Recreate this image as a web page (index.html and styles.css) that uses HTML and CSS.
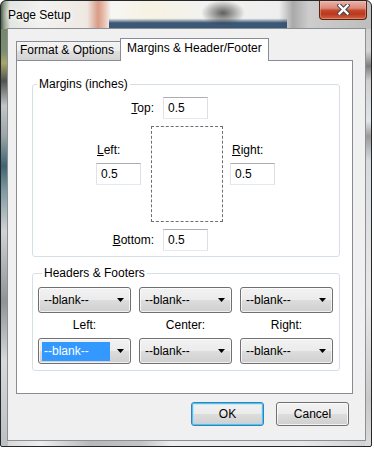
FILE: index.html
```html
<!DOCTYPE html>
<html>
<head>
<meta charset="utf-8">
<title>Page Setup</title>
<link rel="stylesheet" href="styles.css">
</head>
<body>
<div class="window">
  <div class="titlebar">
    <span class="title">Page Setup</span>
    <div class="close">
      <svg width="13" height="11" viewBox="0 0 13 11"><path d="M2.5 1.5 L10.5 9.5 M10.5 1.5 L2.5 9.5" stroke="#40464c" stroke-width="4.4" stroke-linecap="square"/><path d="M2.5 1.5 L10.5 9.5 M10.5 1.5 L2.5 9.5" stroke="#ffffff" stroke-width="2.4" stroke-linecap="square"/></svg>
    </div>
  </div>
  <div class="client">
    <div class="tabs">
      <div class="tab">Format &amp; Options</div>
      <div class="tab active">Margins &amp; Header/Footer</div>
    </div>
    <div class="panel">
      <fieldset class="group margins">
        <legend>Margins (inches)</legend>
        <div class="mrow">
          <label class="mlabel"><u>T</u>op:</label>
          <div class="input">0.5</div>
        </div>
        <div class="mmid">
          <div class="side left">
            <label class="slabel"><u>L</u>eft:</label>
            <div class="input">0.5</div>
          </div>
          <div class="preview"></div>
          <div class="side right">
            <label class="slabel"><u>R</u>ight:</label>
            <div class="input">0.5</div>
          </div>
        </div>
        <div class="mrow bottom">
          <label class="mlabel"><u>B</u>ottom:</label>
          <div class="input">0.5</div>
        </div>
      </fieldset>
      <fieldset class="group hf">
        <legend>Headers &amp; Footers</legend>
        <div class="hfgrid">
          <div class="combo"><span>--blank--</span><svg class="arrow" width="7" height="4" viewBox="0 0 7 4"><polygon points="0,0 7,0 3.5,4" fill="#000"/></svg></div>
          <div class="combo"><span>--blank--</span><svg class="arrow" width="7" height="4" viewBox="0 0 7 4"><polygon points="0,0 7,0 3.5,4" fill="#000"/></svg></div>
          <div class="combo"><span>--blank--</span><svg class="arrow" width="7" height="4" viewBox="0 0 7 4"><polygon points="0,0 7,0 3.5,4" fill="#000"/></svg></div>
          <div class="hflabel">Left:</div>
          <div class="hflabel">Center:</div>
          <div class="hflabel">Right:</div>
          <div class="combo focused"><span class="sel">--blank--</span><svg class="arrow" width="7" height="4" viewBox="0 0 7 4"><polygon points="0,0 7,0 3.5,4" fill="#000"/></svg></div>
          <div class="combo"><span>--blank--</span><svg class="arrow" width="7" height="4" viewBox="0 0 7 4"><polygon points="0,0 7,0 3.5,4" fill="#000"/></svg></div>
          <div class="combo"><span>--blank--</span><svg class="arrow" width="7" height="4" viewBox="0 0 7 4"><polygon points="0,0 7,0 3.5,4" fill="#000"/></svg></div>
        </div>
      </fieldset>
    </div>
    <div class="buttons">
      <button class="btn default">OK</button>
      <button class="btn">Cancel</button>
    </div>
  </div>
</div>
</body>
</html>
```
FILE: styles.css
```css
* { box-sizing: border-box; }
html, body { margin: 0; padding: 0; background: #ffffff; }
body {
  font-family: "Liberation Sans", Arial, sans-serif;
  font-size: 12px;
  color: #000;
}

.window {
  width: 372px;
  height: 447px;
  border: 1px solid #23282c;
  border-radius: 6px 6px 2px 2px;
  display: flex;
  flex-direction: column;
  overflow: hidden;
  background:
    radial-gradient(ellipse 22px 13px at 222px 12px, rgba(45,45,45,0.75), rgba(45,45,45,0) 100%) no-repeat,
    linear-gradient(to bottom, rgba(44,74,108,0) 0, rgba(44,74,108,0) 62%, rgba(44,74,108,0.92) 78%, rgba(44,74,108,0.92) 100%) 108px 0 / 178px 28px no-repeat,
    linear-gradient(to right, #4f5f4b 0, #8d9c87 3px, #e3e5e0 9px, #f2f2f0 40px, #efe8e2 86px, #d89c86 97px, #e6b8a4 102px, #f6f6f4 110px, #f7f3e2 150px, #f2f2f0 200px, #eeeeee 278px, #a9a9a9 292px, #cdcdcd 308px, #bdbdbd 372px) 0 0 / 100% 28px no-repeat,
    linear-gradient(to bottom, #6e8266 0, #7b8c70 50px, #a9a66a 62px, #50534f 80px, #c3c6c8 105px, #9aa5a8 135px, #3e6571 165px, #7f9aa2 190px, #d0d2d4 230px, #8f9396 300px, #d6d8da 360px, #bcbfc2 447px) 0 0 / 7px 100% no-repeat,
    linear-gradient(to bottom, #c8c8c8 0, #d4d4d4 50px, #7d7d7d 65px, #cfcfcf 80px, #e2e4e6 120px, #9a9a9a 135px, #d9dadc 160px, #e8e8e8 300px, #c9c9c9 400px, #dcdcdc 447px) 100% 0 / 6px 100% no-repeat,
    linear-gradient(to right, #d5d5d5 0, #eeeeee 40px, #b8b8b8 90px, #c4c4c4 140px, #ededed 170px, #e8e8e8 300px, #d0d0d0 372px) 0 100% / 100% 6px no-repeat,
    #d8d9da;
}

.titlebar {
  flex: none;
  height: 27px;
  display: flex;
  justify-content: space-between;
  align-items: flex-start;
  padding: 0 4px 0 7px;
}
.title {
  margin-top: 6px;
  line-height: 16px;
  color: #000;
  text-shadow: 0 0 5px #fff, 0 0 9px rgba(255,255,255,0.9), 0 0 12px rgba(255,255,255,0.8);
}
.close {
  width: 48px;
  height: 19px;
  border: 1px solid #5b1f14;
  border-top: none;
  border-radius: 0 0 4px 4px;
  background: linear-gradient(to bottom, #ebb3a6 0, #d9897a 40%, #c6472c 52%, #b9391e 72%, #d2623f 100%);
  box-shadow: inset 0 0 0 1px rgba(255,200,185,0.35);
  display: flex;
  align-items: center;
  justify-content: center;
  padding-bottom: 1px;
}

.client {
  flex: none;
  height: 413px;
  margin: 0 5px 0 6px;
  background: #f0f0f0;
  border: 1px solid #8c9095;
  padding: 9px 12px 0 8px;
  display: flex;
  flex-direction: column;
}

.tabs {
  display: flex;
  align-items: flex-end;
  height: 23px;
  margin-bottom: -1px;
  position: relative;
  z-index: 1;
}
.tab {
  width: 105px;
  height: 19px;
  margin-bottom: 1px;
  padding: 0 0 0 3px;
  border: 1px solid #898c95;
  border-bottom: none;
  line-height: 17px;
  white-space: nowrap;
  background: linear-gradient(to bottom, #f4f4f4 0, #ececec 50%, #dfdfdf 50%, #d4d4d4 100%);
}
.tab.active {
  width: 149px;
  height: 23px;
  margin-bottom: 0;
  margin-left: -1px;
  padding: 1px 0 0 6px;
  line-height: 16px;
  background: #ffffff;
}

.panel {
  flex: none;
  height: 334px;
  background: #ffffff;
  border: 1px solid #898c95;
  padding: 0 12px 0 15px;
}

fieldset.group {
  margin: 0;
  min-width: 0;
  border: 1px solid #d5dfe5;
  border-radius: 3px;
}
fieldset.group legend {
  margin-left: 4px;
  padding: 0 2px;
  height: 16px;
  line-height: 16px;
}
.margins {
  margin-top: 15px !important;
  padding: 5px 0 5px 0;
}
.hf {
  margin-top: 8px !important;
  padding: 6px 6px 6px 5px;
}

.input {
  width: 45px;
  height: 22px;
  border: 1px solid;
  border-color: #abadb3 #dbdfe6 #e3e9ef #e2e3ea;
  background: #fff;
  padding-left: 4px;
  line-height: 20px;
}

.mrow {
  display: flex;
  align-items: center;
  height: 22px;
  padding-left: 62px;
}
.mrow.bottom { margin-top: 7px; }
.mlabel {
  width: 59px;
  margin-right: 9px;
  text-align: right;
  line-height: 16px;
}

.mmid {
  display: grid;
  grid-template-columns: 118px 72px 1fr;
  margin-top: 7px;
}
.side { padding-top: 16px; }
.side.left { padding-left: 63px; }
.side.right { padding-left: 7px; }
.slabel {
  display: block;
  line-height: 16px;
  padding-left: 1px;
}
.side.right .slabel { padding-left: 2px; }
.side .input { margin-top: 5px; }

.preview {
  height: 96px;
  border: 1px dashed #6f6f6f;
}

.hfgrid {
  display: grid;
  grid-template-columns: repeat(3, 93px);
  grid-template-rows: 26px 25px 26px;
  column-gap: 8px;
}
.combo {
  height: 26px;
  border: 1px solid #707070;
  border-radius: 3px;
  background: linear-gradient(to bottom, #f2f2f2 0, #ebebeb 50%, #dddddd 50%, #cfcfcf 100%);
  box-shadow: inset 0 0 0 1px rgba(255,255,255,0.7);
  display: flex;
  align-items: center;
  justify-content: space-between;
  padding: 0 6px 0 5px;
  white-space: nowrap;
}
.combo.focused { padding-left: 3px; }
.combo .sel {
  width: 68px;
  height: 19px;
  line-height: 19px;
  padding-left: 2px;
  background: #3399ff;
  color: #fff;
}
.arrow { display: block; flex: none; }
.hflabel {
  text-align: center;
  line-height: 25px;
}

.buttons {
  display: flex;
  justify-content: flex-end;
  gap: 12px;
  margin-top: 8px;
  padding-right: 4px;
}
.btn {
  width: 73px;
  height: 24px;
  margin: 0;
  padding: 0;
  font-family: inherit;
  font-size: 12px;
  color: #000;
  border: 1px solid #707070;
  border-radius: 3px;
  background: linear-gradient(to bottom, #f2f2f2 0, #ebebeb 50%, #dddddd 50%, #cfcfcf 100%);
  box-shadow: inset 0 0 0 1px rgba(255,255,255,0.75);
}
.btn.default {
  border-color: #3c7fb1;
  background: linear-gradient(to bottom, #eaf6fd 0, #d9f0fc 50%, #bee6fd 50%, #a7d9f5 100%);
  background: linear-gradient(to bottom, #f2f2f2 0, #ebebeb 50%, #dddddd 50%, #cfcfcf 100%);
  box-shadow: inset 0 0 0 1px #48c4f5, inset 0 0 0 2px rgba(160,220,250,0.5);
}
```
